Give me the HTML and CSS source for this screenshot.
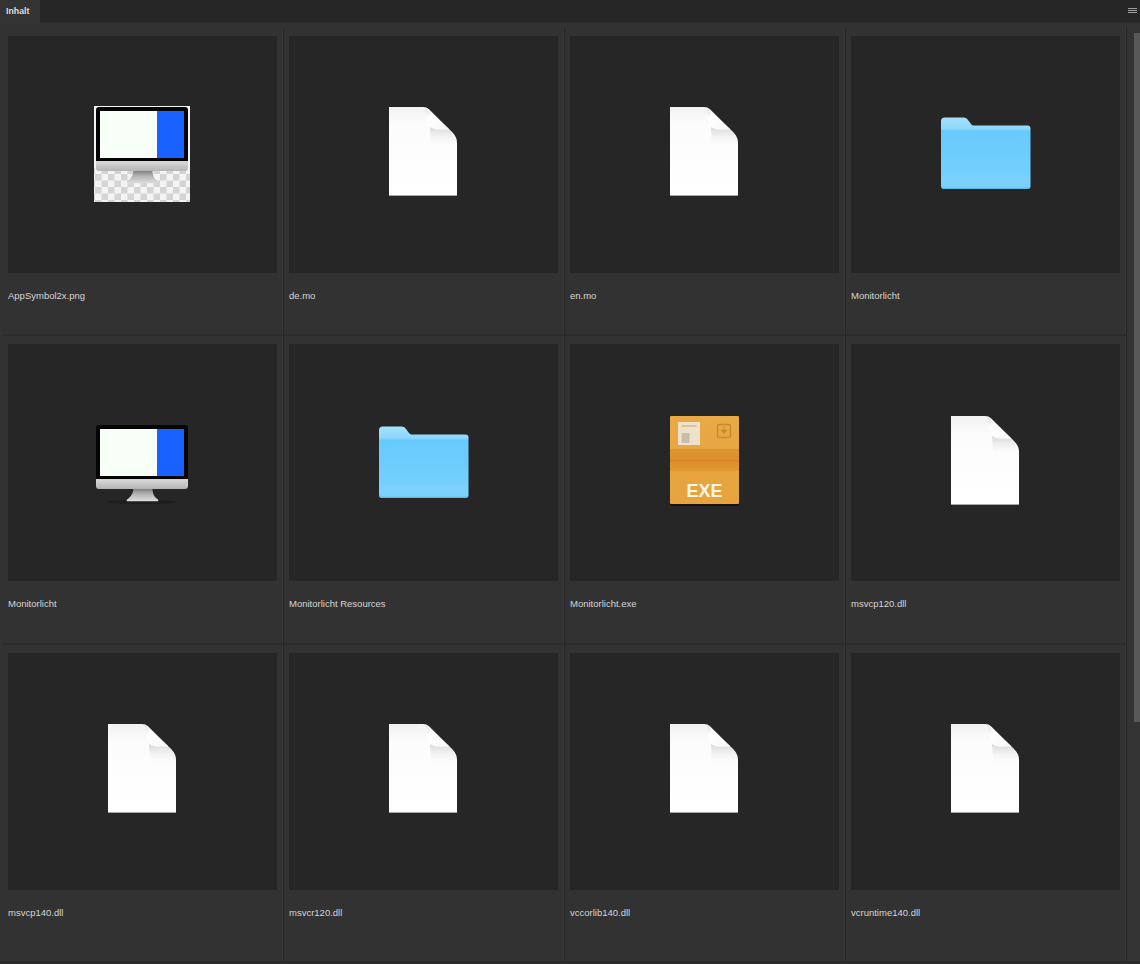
FILE: index.html
```html
<!DOCTYPE html>
<html lang="de">
<head>
<meta charset="utf-8">
<title>Inhalt</title>
<link rel="stylesheet" href="styles.css">
</head>
<body>
<svg class="defs" width="0" height="0" aria-hidden="true">
  <defs>
    <linearGradient id="pageGrad" x1="0" y1="0" x2="0" y2="1">
      <stop offset="0" stop-color="#f2f2f2"/><stop offset=".2" stop-color="#fcfcfc"/><stop offset="1" stop-color="#ffffff"/>
    </linearGradient>
    <linearGradient id="curlGrad" x1="0" y1="0" x2="1" y2="1">
      <stop offset="0" stop-color="#e2e2e2"/><stop offset=".3" stop-color="#ffffff"/><stop offset="1" stop-color="#f6f6f6"/>
    </linearGradient>
    <linearGradient id="curlShadow" x1="0" y1="0" x2="0" y2="1">
      <stop offset="0" stop-color="#c4c4c4"/><stop offset="1" stop-color="#ffffff" stop-opacity="0"/>
    </linearGradient>
    <linearGradient id="folderGrad" gradientUnits="userSpaceOnUse" x1="0" y1="11" x2="0" y2="83">
      <stop offset="0" stop-color="#a6e1fd"/><stop offset=".16" stop-color="#8ed8fc"/><stop offset=".2" stop-color="#68caFC"/><stop offset=".8" stop-color="#74cffe"/><stop offset=".84" stop-color="#7dd2fd"/><stop offset="1" stop-color="#78d0fb"/>
    </linearGradient>
    <linearGradient id="chinGrad" x1="0" y1="0" x2="0" y2="1">
      <stop offset="0" stop-color="#a8a8a8"/><stop offset=".35" stop-color="#d8d8d8"/><stop offset="1" stop-color="#b4b4b4"/>
    </linearGradient>
    <linearGradient id="standGrad" x1="0" y1="0" x2="0" y2="1">
      <stop offset="0" stop-color="#6f6f6f"/><stop offset=".5" stop-color="#b4b4b4"/><stop offset="1" stop-color="#dedede"/>
    </linearGradient>
    <linearGradient id="boxGrad" x1="0" y1="0" x2="0" y2="1">
      <stop offset="0" stop-color="#e9a945"/><stop offset="1" stop-color="#e6a33e"/>
    </linearGradient>
    <linearGradient id="bandGrad" x1="0" y1="0" x2="0" y2="1">
      <stop offset="0" stop-color="#dc9533"/><stop offset=".48" stop-color="#dd8f2c"/><stop offset=".5" stop-color="#c9761d"/><stop offset=".54" stop-color="#dc8d2b"/><stop offset="1" stop-color="#e0982f"/>
    </linearGradient>
    <pattern id="checker" width="13" height="13" patternUnits="userSpaceOnUse" x="1" y="3">
      <rect width="13" height="13" fill="#f4f4f4"/>
      <rect width="6.500" height="6.500" fill="#d4d4d4"/>
      <rect x="6.500" y="6.500" width="6.500" height="6.500" fill="#d4d4d4"/>
    </pattern>
    <symbol id="file" viewBox="0 0 96 96">
      <path d="M14 1H48c2.500 0 4.500.8 6.300 2.500L76 25c3.800 3.700 6 7 6 12V90H14Z" fill="url(#pageGrad)"/>
      <path d="M14 89.200h68v.8h-68z" fill="#8a8a8a"/>
      <path d="M55 20 75 24l6.500 9v9H56Z" fill="url(#curlShadow)" opacity=".75"/>
      <path d="M51 2.500 74 23c-6 1.500-15 1-19-2-3-5-3-13-4-18.500Z" fill="url(#curlGrad)"/>
    </symbol>
    <symbol id="folder" viewBox="0 0 96 96">
      <path d="M4 15c0-2.300 1.500-3.500 3.500-3.500H26.500c2.500 0 3.500 1 4.500 2.500l3 4c.8 1 2 1.500 3.500 1.500H90.500c2 0 3 1.200 3 3V80c0 1.800-1.200 3-3 3H7c-1.800 0-3-1.200-3-3Z" fill="url(#folderGrad)"/>
      <path d="M7 83H90.500c1.800 0 3-1.200 3-3v-.8c0 1.500-1 2.500-3 2.500H7c-2 0-3-1-3-2.500v.8c0 1.800 1.200 3 3 3Z" fill="#5fb8e6"/>
    </symbol>
    <symbol id="monitor" viewBox="0 0 96 96">
      <path d="M39.500 72h19c0 5 .5 8 3.500 11l2 1.500c.8.800.2 1.800-1 1.800H34c-1.200 0-1.800-1-1-1.800l2-1.500c3-3 4.500-6 4.500-11Z" fill="url(#standGrad)"/>
      <path d="M2 60h92v11c0 1.800-1 3-3 3H5c-2 0-3-1.200-3-3Z" fill="url(#chinGrad)"/>
      <path d="M5 10h86c2 0 3 1 3 3v51H2V13c0-2 1-3 3-3Z" fill="#050505"/>
      <rect x="6" y="14" width="57" height="47" fill="#f8fff6"/>
      <rect x="63" y="14" width="27" height="47" fill="#1a62ff"/>
    </symbol>
  </defs>
</svg>

<header class="tabbar">
  <div class="tab">Inhalt</div>
  <div class="menu"><span></span><span></span><span></span></div>
</header>

<main class="body">
  <section class="grid">
    <article class="cell">
      <div class="preview">
        <svg class="icon" viewBox="0 0 96 96">
          <rect width="96" height="96" fill="url(#checker)"/>
          <rect width="96" height="62" fill="#f4f4f4"/>
          <use href="#monitor" x="0" y="-9" width="96" height="96"/>
        </svg>
      </div>
      <p class="name">AppSymbol2x.png</p>
    </article>
    <article class="cell">
      <div class="preview"><svg class="icon"><use href="#file"/></svg></div>
      <p class="name">de.mo</p>
    </article>
    <article class="cell">
      <div class="preview"><svg class="icon"><use href="#file"/></svg></div>
      <p class="name">en.mo</p>
    </article>
    <article class="cell">
      <div class="preview"><svg class="icon"><use href="#folder"/></svg></div>
      <p class="name">Monitorlicht</p>
    </article>

    <article class="cell">
      <div class="preview">
        <svg class="icon" viewBox="0 0 96 96">
          <ellipse cx="48" cy="87" rx="36" ry="2" fill="#1e1e1e"/>
          <use href="#monitor" width="96" height="96"/>
        </svg>
      </div>
      <p class="name">Monitorlicht</p>
    </article>
    <article class="cell">
      <div class="preview"><svg class="icon"><use href="#folder"/></svg></div>
      <p class="name">Monitorlicht Resources</p>
    </article>
    <article class="cell">
      <div class="preview">
        <svg class="icon" viewBox="0 0 96 96">
          <rect x="14" y="2" width="69" height="89" rx="1" fill="#1a1208"/>
          <rect x="14" y="1" width="69" height="88" rx="1" fill="url(#boxGrad)"/>
          <rect x="14" y="34" width="69" height="22" fill="url(#bandGrad)"/>
          <rect x="22" y="7" width="22" height="23" fill="#efe2cc"/>
          <rect x="25.500" y="18" width="8" height="10" fill="#c9bda9"/>
          <rect x="25.500" y="10" width="15" height="2" fill="#dcc49a"/>
          <rect x="61.500" y="9.500" width="13" height="13" rx="2" fill="none" stroke="#c88a35" stroke-width="1.500"/>
          <path d="M68 11.500v5M65 15l3 3.500 3-3.500Z" fill="#c88a35" stroke="#c88a35"/>
          <text class="exe" x="48.500" y="81.500" text-anchor="middle">EXE</text>
        </svg>
      </div>
      <p class="name">Monitorlicht.exe</p>
    </article>
    <article class="cell">
      <div class="preview"><svg class="icon"><use href="#file"/></svg></div>
      <p class="name">msvcp120.dll</p>
    </article>

    <article class="cell">
      <div class="preview"><svg class="icon"><use href="#file"/></svg></div>
      <p class="name">msvcp140.dll</p>
    </article>
    <article class="cell">
      <div class="preview"><svg class="icon"><use href="#file"/></svg></div>
      <p class="name">msvcr120.dll</p>
    </article>
    <article class="cell">
      <div class="preview"><svg class="icon"><use href="#file"/></svg></div>
      <p class="name">vccorlib140.dll</p>
    </article>
    <article class="cell">
      <div class="preview"><svg class="icon"><use href="#file"/></svg></div>
      <p class="name">vcruntime140.dll</p>
    </article>
  </section>
  <aside class="scrollbar"><div class="thumb"></div></aside>
</main>
</body>
</html>
```

FILE: styles.css
```css
html, body {
  margin: 0;
  height: 964px;
  overflow: hidden;
  background: #2a2a2a;
  font-family: "Liberation Sans", Arial, sans-serif;
}

.defs {
  display: block;
  width: 0;
  height: 0;
}

.tabbar {
  display: flex;
  justify-content: space-between;
  align-items: center;
  height: 23px;
  background: #262626;
  border-bottom: 1px solid #2b2b2b;
  box-sizing: border-box;
}

.tab {
  width: 40px;
  height: 23px;
  box-sizing: border-box;
  padding: 6px 0 0 6px;
  background: #333333;
  color: #dcdcdc;
  font-size: 8.8px;
  line-height: 10px;
  font-weight: 700;
}

.menu {
  display: flex;
  flex-direction: column;
  gap: 1px;
  width: 9px;
  margin-right: 3px;
  margin-top: -1px;
}

.menu span {
  height: 1px;
  background: #a0a0a0;
}

.body {
  display: flex;
  height: 938px;
  background: #323232;
}

.grid {
  display: grid;
  grid-template-columns: repeat(4, 281px);
  grid-template-rows: 308.7px 308.7px 1fr;
  padding: 4.6px 0 0 3px;
  flex: none;
  box-sizing: border-box;
  height: 938px;
}

.cell {
  box-sizing: border-box;
  padding: 8px 6px 0 5px;
  border-right: 1px solid #262626;
  border-bottom: 2px solid #2c2c2c;
  box-shadow: inset -1px 0 0 #383838;
}

.cell:nth-last-child(-n+4) {
  border-bottom: 0;
}

.preview {
  display: flex;
  align-items: center;
  justify-content: center;
  box-sizing: border-box;
  width: 269px;
  height: 237px;
  padding-right: 1px;
  background: #262626;
}

.icon {
  display: block;
  width: 96px;
  height: 96px;
  flex: none;
}

.name {
  margin: 17px 0 0;
  color: #d6d6d6;
  font-size: 9.5px;
  line-height: 12px;
  white-space: nowrap;
}

.exe {
  fill: #fff6e6;
  font-family: "Liberation Sans", Arial, sans-serif;
  font-size: 18px;
  font-weight: 700;
}

.scrollbar {
  flex: 1;
  padding: 10px 0 0 7px;
  background: #333333;
}

.thumb {
  width: 6px;
  height: 689px;
  background: #585858;
}
```
